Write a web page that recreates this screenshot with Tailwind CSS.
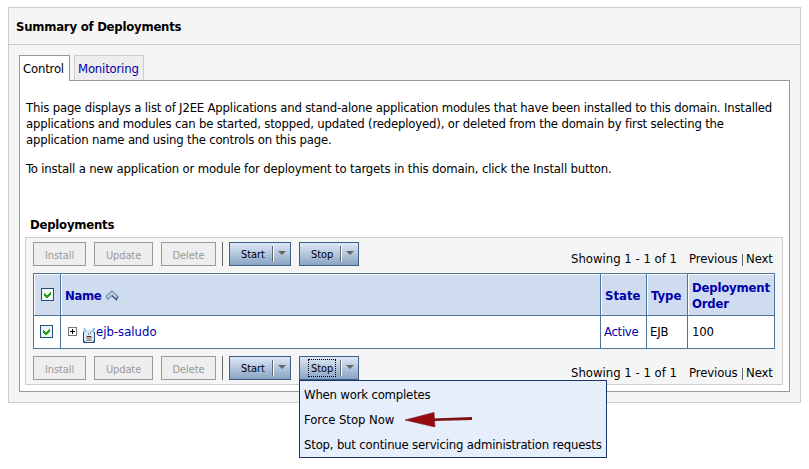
<!DOCTYPE html>
<html lang="en">
<head>
<meta charset="utf-8">
<title>Summary of Deployments</title>
<script src="https://cdn.jsdelivr.net/npm/@tailwindcss/browser@4"></script>
</head>
<body class="bg-white h-[469px] pt-[7px] text-black font-['DejaVu_Sans_Condensed','DejaVu_Sans',sans-serif] [font-stretch:condensed] text-[13px] leading-4 tracking-[-0.19px] whitespace-nowrap">
<svg class="hidden">
  <symbol id="check" viewBox="0 0 13 13"><rect x=".5" y=".5" width="12" height="12" fill="#f4f4f0" stroke="#1c5180"/><path d="M3 5v3l2 2h1l4-4V3L6 7H5z" fill="#21a121" shape-rendering="crispEdges"/></symbol>
</svg>
<main class="ml-2 w-[793px] h-[396px] border border-[#ccc] bg-[#f5f5f5]">
  <h1 class="h-9 pl-[7px] pt-[11px] font-bold tracking-[-0.23px]">Summary of Deployments</h1>
  <div class="border-t border-[#ccc] pl-2.5 pt-2.5">
    <nav class="flex h-[26px] relative -mb-px">
      <a class="w-[51px] h-[26px] border border-b-0 border-[#999] bg-white pl-[3px] pt-[5px]">Control</a>
      <a class="ml-1 w-[70px] h-[25px] border border-b-0 border-[#ccc] bg-[#eee] pl-[3px] pt-[5px] text-[#00a]">Monitoring</a>
    </nav>
    <section class="w-[771px] h-[312px] border border-[#999] bg-white pl-[5px] pt-[19px]">
      <p class="pl-px">This page displays a list of J2EE Applications and stand-alone application modules that have been installed to this domain. Installed<br>applications and modules can be started, stopped, updated (redeployed), or deleted from the domain by first selecting the<br>application name and using the controls on this page.</p>
      <p class="pl-px mt-[13px] tracking-[-0.17px]">To install a new application or module for deployment to targets in this domain, click the Install button.</p>
      <h2 class="mt-10 pl-[5px] font-bold tracking-[-0.23px]">Deployments</h2>
      <div class="mt-1 w-[758px] h-[148px] border border-[#ccc] bg-[#f5f5f5] pl-[7px] pt-1">
        <div class="flex h-6 text-[11px] leading-[14px] tracking-[-0.1px]">
          <button class="w-[53px] h-6 border border-[#999] bg-[#eee] text-[#999] pt-[3px]">Install</button>
          <button class="ml-2 w-[59px] h-6 border border-[#999] bg-[#eee] text-[#999] pt-[3px]">Update</button>
          <button class="ml-2 w-[55px] h-6 border border-[#999] bg-[#eee] text-[#999] pt-[3px]">Delete</button>
          <i class="ml-1.5 w-px h-6 bg-[#666]"></i>
          <button class="ml-1.5 w-[62px] h-6 border border-[#3d5f86] bg-linear-to-b from-[#dfe9f8] to-[#89a4c3] flex pl-[11px]"><span class="w-[31px] pt-[5px] text-left">Start</span><i class="w-0.5 h-4 mt-[3px] border-l border-[#666] bg-white"></i><svg class="ml-1 mt-2 w-[8px] h-[4px]" viewBox="0 0 8 4"><path d="M0 0h8L4 4z" fill="#666"/></svg></button>
          <button class="ml-2 w-[60px] h-6 border border-[#3d5f86] bg-linear-to-b from-[#dfe9f8] to-[#89a4c3] flex pl-[11px]"><span class="w-[29px] pt-[5px] text-left">Stop</span><i class="w-0.5 h-4 mt-[3px] border-l border-[#666] bg-white"></i><svg class="ml-1 mt-2 w-[8px] h-[4px]" viewBox="0 0 8 4"><path d="M0 0h8L4 4z" fill="#666"/></svg></button>
          <div class="ml-[212px] pt-[9px] flex text-[13px] leading-4"><span class="w-[118px] tracking-normal">Showing 1 - 1 of 1</span><span class="w-[53px]">Previous</span><i class="w-px h-3 mt-[3px] bg-[#666]"></i><span class="ml-[3px]">Next</span></div>
        </div>
        <div class="mt-[7px] w-[742px] h-[76px] grid grid-cols-[26px_539px_45px_40px_86px] grid-rows-[41px_32px] gap-px p-px pr-[2px] bg-[#4f7499] font-bold text-[#00a]">
          <div class="bg-[#cfdcef] border-l border-t border-white pl-[6px] pt-[13px]"><svg class="w-[13px] h-[13px]"><use href="#check"/></svg></div>
          <div class="bg-[#cfdcef] border-l border-t border-white pl-[3px] pt-[13px] flex"><span class="w-[40px] tracking-[-0.4px]">Name</span><svg class="w-[14px] h-[11px] mt-0.5" viewBox="0 0 14 11"><path d="M1 6.4 7 .8 13 6.4 11.2 9.4 7 5.6 2.8 9.4z" fill="#b4c7e2" stroke="#5d7798"/><path d="M7 5.6 11.2 9.6 13 6.6" fill="none" stroke="#3d5b84" stroke-width="1.3"/></svg></div>
          <div class="bg-[#cfdcef] border-l border-t border-white pl-[3px] pt-[13px] tracking-normal">State</div>
          <div class="bg-[#cfdcef] border-l border-t border-white pl-[3px] pt-[13px] tracking-normal">Type</div>
          <div class="bg-[#cfdcef] border-l border-t border-white pl-[3px] pt-[5px]">Deployment<br>Order</div>
          <div class="bg-white pl-[6px] pt-[9px]"><svg class="w-[13px] h-[13px]"><use href="#check"/></svg></div>
          <div class="bg-white flex font-normal pl-[7px]">
            <svg class="w-[9px] h-[9px] mt-[11px]" viewBox="0 0 9 9" shape-rendering="crispEdges"><path d="M.5.5h8v8h-8z" fill="#fff" stroke="#777"/><path d="M2 4.5h5M4.5 2v5" stroke="#000"/></svg>
            <svg class="w-[12px] h-[16px] ml-1.5 mt-[11px]" viewBox="0 0 12 16"><path d="M0 1h2l1 2h6l1-2h2v2l-1 2v9H0V5l1-2z" fill="#9cc3ea"/><path d="M2 5h8l1 2v6l-2 2H2l-1-2V7z" fill="#dcebf9"/><path d="M0 5h1v9h1v1h8v-1h1V5h1v10l-1 1H1l-1-1z" fill="#29476f"/><path d="M3 3h6v2H3z" fill="#c6e4f2"/><path d="M3 9h6v2L8 13H4L3 11z" fill="#bda69b"/><path d="M4 9h4v1H4z" fill="#4b2c25"/><path d="M5 6h1v2H5zM7 5h1v2H7z" fill="#7f92ab"/><path d="M3 13h6v1H3z" fill="#8599ad"/></svg>
            <span class="ml-px pt-2 tracking-normal">ejb-saludo</span>
          </div>
          <div class="bg-white font-normal pl-[3px] pt-2 tracking-[-0.3px]">Active</div>
          <div class="bg-white font-normal text-black pl-[3px] pt-2">EJB</div>
          <div class="bg-white font-normal text-black pl-1 pt-2">100</div>
        </div>
        <div class="mt-[7px] flex h-6 text-[11px] leading-[14px] tracking-[-0.1px]">
          <button class="w-[53px] h-6 border border-[#999] bg-[#eee] text-[#999] pt-[3px]">Install</button>
          <button class="ml-2 w-[59px] h-6 border border-[#999] bg-[#eee] text-[#999] pt-[3px]">Update</button>
          <button class="ml-2 w-[55px] h-6 border border-[#999] bg-[#eee] text-[#999] pt-[3px]">Delete</button>
          <i class="ml-1.5 w-px h-6 bg-[#666]"></i>
          <button class="ml-1.5 w-[62px] h-6 border border-[#3d5f86] bg-linear-to-b from-[#dfe9f8] to-[#89a4c3] flex pl-[11px]"><span class="w-[31px] pt-[5px] text-left">Start</span><i class="w-0.5 h-4 mt-[3px] border-l border-[#666] bg-white"></i><svg class="ml-1 mt-2 w-[8px] h-[4px]" viewBox="0 0 8 4"><path d="M0 0h8L4 4z" fill="#666"/></svg></button>
          <div class="relative ml-2">
            <button class="w-[60px] h-6 border border-[#3d5f86] bg-linear-to-b from-[#dfe9f8] to-[#89a4c3] flex pl-2"><span class="w-7 h-[18px] mt-0.5 mr-1 pl-0.5 pt-0.5 text-left border border-dotted border-black">Stop</span><i class="w-0.5 h-4 mt-[3px] border-l border-[#666] bg-white"></i><svg class="ml-1 mt-2 w-[8px] h-[4px]" viewBox="0 0 8 4"><path d="M0 0h8L4 4z" fill="#666"/></svg></button>
            <ul class="absolute left-0 top-6 w-[308px] h-[78px] border border-[#17366a] bg-[#e6edfb] pl-1 pt-px text-[13px] leading-[25px] tracking-[-0.19px]">
              <li>When work completes</li>
              <li class="flex tracking-[-0.05px]"><span class="w-[101px]">Force Stop Now</span><svg class="w-[68px] h-[15px] mt-[5px]" viewBox="0 0 68 15"><path d="M28 6.5 67 5v3L28 9z" fill="#7b1015"/><path d="M0 8 29 .5 30 15z" fill="#960a10" stroke="#76191e" stroke-width=".6"/></svg></li>
              <li>Stop, but continue servicing administration requests</li>
            </ul>
          </div>
          <div class="ml-[212px] pt-[9px] flex text-[13px] leading-4"><span class="w-[118px] tracking-normal">Showing 1 - 1 of 1</span><span class="w-[53px]">Previous</span><i class="w-px h-3 mt-[3px] bg-[#666]"></i><span class="ml-[3px]">Next</span></div>
        </div>
      </div>
    </section>
  </div>
</main>
</body>
</html>
